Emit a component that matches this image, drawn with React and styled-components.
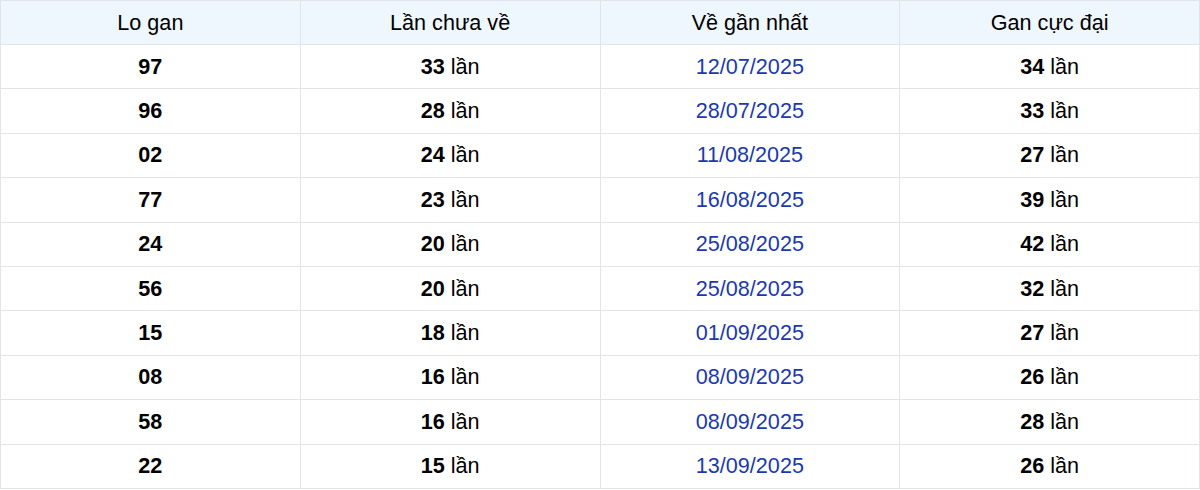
import React from "react";
import styled, { createGlobalStyle } from "styled-components";

const GlobalStyle = createGlobalStyle`
  html, body {
    margin: 0;
    padding: 0;
    background: #fff;
  }
  body {
    font-family: "Liberation Sans", Arial, sans-serif;
  }
`;

const rows = [
  ["97", "33", "12/07/2025", "34"],
  ["96", "28", "28/07/2025", "33"],
  ["02", "24", "11/08/2025", "27"],
  ["77", "23", "16/08/2025", "39"],
  ["24", "20", "25/08/2025", "42"],
  ["56", "20", "25/08/2025", "32"],
  ["15", "18", "01/09/2025", "27"],
  ["08", "16", "08/09/2025", "26"],
  ["58", "16", "08/09/2025", "28"],
  ["22", "15", "13/09/2025", "26"],
];

const Table = styled.table`
  width: 1200px;
  border-collapse: collapse;
  table-layout: fixed;
  font-size: 21.6px;
  color: #000;
`;

const HeadCell = styled.th`
  height: 43px;
  padding: 0;
  background: #eef6fe;
  font-weight: 400;
  text-align: center;
  border: 1px solid #e1e4e8;
`;

const Cell = styled.td`
  height: 43.4px;
  padding: 0;
  text-align: center;
  border: 1px solid #e1e4e8;
  color: ${(p) => (p.$date ? "#1a39ae" : "#000")};
`;

const Num = styled.b`
  font-weight: 700;
`;

export default function App() {
  return (
    <>
      <GlobalStyle />
      <Table>
        <thead>
          <tr>
            <HeadCell>Lo gan</HeadCell>
            <HeadCell>Lần chưa về</HeadCell>
            <HeadCell>Về gần nhất</HeadCell>
            <HeadCell>Gan cực đại</HeadCell>
          </tr>
        </thead>
        <tbody>
          {rows.map((r, i) => (
            <tr key={i}>
              <Cell>
                <Num>{r[0]}</Num>
              </Cell>
              <Cell>
                <Num>{r[1]}</Num> lần
              </Cell>
              <Cell $date>{r[2]}</Cell>
              <Cell>
                <Num>{r[3]}</Num> lần
              </Cell>
            </tr>
          ))}
        </tbody>
      </Table>
    </>
  );
}
